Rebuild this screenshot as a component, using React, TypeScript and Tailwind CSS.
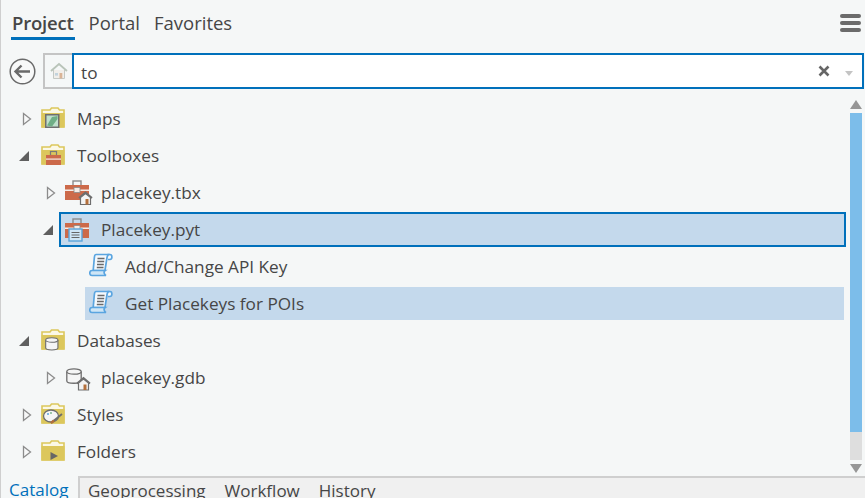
import type { ReactNode } from 'react';

const Expand = () => (
  <svg width="10" height="14" viewBox="0 0 10 14" className="block">
    <path d="M1.5 1.5 L8.5 7 L1.5 12.5 Z" fill="#f7f8f8" stroke="#8c8c8c" strokeWidth="1.3" />
  </svg>
);

const Collapse = () => (
  <svg width="10" height="10" viewBox="0 0 10 10" className="block">
    <path d="M10 0 V10 H0 Z" fill="#5f5f5f" />
  </svg>
);

// dossier jaune de base
const Folder = ({ children }: { children?: ReactNode }) => (
  <svg width="24" height="22" viewBox="0 0 24 22" className="block -mt-[2px]">
    <path d="M1 3 H9 L10.5 1 H17 L18.5 3 H23 V20 H1 Z" fill="#fbf8e6" stroke="#dcc75c" strokeWidth="1.6" />
    <rect x="0.5" y="6" width="23" height="14.5" fill="#dcc75c" />
    {children}
  </svg>
);

const House = ({ x, y }: { x: number; y: number }) => (
  <g transform={`translate(${x} ${y})`}>
    <path d="M1 6.5 L7.5 1 L14 6.5" fill="none" stroke="#6e6e6e" strokeWidth="1.8" />
    <path d="M2.5 6 L7.5 2 L12.5 6 V13 H2.5 Z" fill="#f4f4f4" stroke="#6e6e6e" strokeWidth="1.2" />
    <rect x="7.5" y="7.5" width="3" height="5.5" fill="#b4703c" />
  </g>
);

const Toolbox = ({ x = 0, y = 0 }: { x?: number; y?: number }) => (
  <g transform={`translate(${x} ${y})`}>
    <rect x="8" y="1" width="8" height="5" fill="none" stroke="#8a8a8a" strokeWidth="1.4" />
    <rect x="0" y="5" width="24" height="15" fill="#cc6a4a" />
    <rect x="0" y="9.5" width="24" height="1.5" fill="#f6ece6" />
    <rect x="9" y="7.5" width="6" height="5" fill="#f6ece6" stroke="#8a8a8a" strokeWidth="0.8" />
  </g>
);

const IconMaps = () => (
  <Folder>
    <rect x="4.75" y="7.75" width="13" height="12.5" fill="#bfe0cc" stroke="#6f6f6f" strokeWidth="1.5" />
    <path d="M6 18.5 L11 10 L16.5 9 V12 L11 19.5 Z" fill="#6fae86" />
  </Folder>
);

const IconToolboxes = () => (
  <Folder>
    <rect x="9.5" y="7.5" width="6" height="4" fill="none" stroke="#7a7a7a" strokeWidth="1.2" />
    <rect x="5" y="11" width="15" height="10" fill="#cc6a4a" />
    <rect x="5" y="14.5" width="15" height="1.2" fill="#f6ece6" />
  </Folder>
);

const IconTbx = () => (
  <svg width="28" height="26" viewBox="0 0 28 26" className="block">
    <Toolbox />
    <House x={13} y={11.5} />
  </svg>
);

const IconPyt = () => (
  <svg width="24" height="24" viewBox="0 0 24 24" className="block">
    <Toolbox />
    <rect x="4" y="11" width="13" height="12" fill="#cfe6f6" stroke="#5ba3d9" strokeWidth="1.4" />
    <path d="M6.5 14.5 H14.5 M6.5 17 H14.5 M6.5 19.5 H14.5" stroke="#666" strokeWidth="1.2" />
  </svg>
);

const IconScript = () => (
  <svg width="24" height="24" viewBox="0 0 24 24" className="block -mt-[3px]">
    <path d="M18.5 1.5 H21 C23.5 1.5 23.5 6.5 21 6.5 H19" fill="#f4f9fd" stroke="#5aa5e0" strokeWidth="1.7" />
    <path d="M7 1.5 C5.5 1.5 5.5 3 5.3 5 L4.2 17.5 H16 L18 4.5 C18.3 3 19 1.5 20.5 1.5 Z" fill="#f4f9fd" stroke="#5aa5e0" strokeWidth="1.7" />
    <path d="M8.5 5.5 H15.5 M8.2 8.5 H15.2 M8 11.5 H14.8 M7.8 14.5 H14.5" stroke="#6a6a6a" strokeWidth="1.5" />
    <path d="M3 17.5 H16 C14.5 18.5 15 21.5 17 22.5 H3 C0 22.5 0 17.5 3 17.5 Z" fill="#cfe6f6" stroke="#5aa5e0" strokeWidth="1.7" />
  </svg>
);

const Db = ({ x, y, s = 1 }: { x: number; y: number; s?: number }) => (
  <g transform={`translate(${x} ${y}) scale(${s})`}>
    <path d="M0.8 3.5 V13 C0.8 16 15.2 16 15.2 13 V3.5" fill="#f5f5f5" stroke="#6e6e6e" strokeWidth="1.3" />
    <ellipse cx="8" cy="3.5" rx="7.2" ry="2.7" fill="#f5f5f5" stroke="#6e6e6e" strokeWidth="1.3" />
  </g>
);

const IconDatabases = () => (
  <Folder>
    <Db x={4} y={8} s={0.85} />
  </Folder>
);

const IconGdb = () => (
  <svg width="28" height="26" viewBox="0 0 28 26" className="block">
    <Db x={1} y={3} />
    <House x={11} y={12} />
  </svg>
);

const IconStyles = () => (
  <Folder>
    <ellipse cx="10" cy="13" rx="7.5" ry="6" fill="#f5f5f5" stroke="#6e6e6e" strokeWidth="1.3" />
    <circle cx="7" cy="11" r="1" fill="#5ba3d9" />
    <circle cx="10" cy="10" r="1" fill="#7fb78f" />
    <path d="M10 20 L21 11" stroke="#6e6e6e" strokeWidth="1.8" />
    <path d="M10 20 L13 17.5" stroke="#b4703c" strokeWidth="2.4" />
  </Folder>
);

const IconFolders = () => (
  <Folder>
    <path d="M9.5 12 L17 16 L9.5 20 Z" fill="#666" />
  </Folder>
);

type RowProps = {
  depth: 0 | 1 | 2;
  arrow?: 'open' | 'closed';
  icon: ReactNode;
  label: string;
  variant?: 'focus' | 'selected';
};

const Row = ({ depth, arrow, icon, label, variant }: RowProps) => {
  const indent = depth === 0 ? 'pl-[18px]' : depth === 1 ? 'pl-[42px]' : 'pl-[84px]';
  const inset = depth === 2 ? 'pl-[4px]' : 'pl-[7px]';
  const box =
    variant === 'focus'
      ? 'h-[35px] bg-[#c4d9ec] border-2 border-[#0070bb] pl-[4px] ml-[1px] mr-[4px]'
      : variant === 'selected'
        ? `h-[33px] bg-[#c4d9ec] mr-[6px] ${inset}`
        : `h-[33px] mr-[6px] ${inset}`;
  return (
    <div className={`flex items-center h-[37px] ${indent}`}>
      {depth < 2 && (
        <div className={`w-[15px] h-full flex items-center shrink-0 ${arrow === 'open' ? 'justify-start' : 'justify-center'}`}>
          {arrow === 'open' ? <Collapse /> : <Expand />}
        </div>
      )}
      <div className={`flex items-center flex-1 min-w-0 ${box}`}>
        <div className="w-[36px] shrink-0">{icon}</div>
        <span className="text-[17.2px] text-[#464646] leading-none whitespace-nowrap">{label}</span>
      </div>
    </div>
  );
};

export default function App() {
  return (
    <div className="w-[865px] h-[498px] overflow-hidden flex flex-col bg-[#f5f7f7] border-l border-[#cfcfcf] font-['Open_Sans',sans-serif]">
      {/* Onglets du haut */}
      <div className="flex items-start h-[53px] pl-[10px] pr-[4px] shrink-0">
        <div className="flex items-center gap-[14px] flex-1 pt-[9px] text-[18.5px] leading-[27px] text-[#464646]">
          <span className="font-semibold border-b-[3px] border-[#0070bb] h-[31px] px-[1px] tracking-[-0.2px]">Project</span>
          <span className="h-[31px]">Portal</span>
          <span className="h-[31px]">Favorites</span>
        </div>
        <div className="flex flex-col gap-[3px] pt-[14px]">
          <div className="w-[21px] h-[4px] rounded-full bg-[#6b6b6b]" />
          <div className="w-[21px] h-[4px] rounded-full bg-[#6b6b6b]" />
          <div className="w-[21px] h-[4px] rounded-full bg-[#6b6b6b]" />
        </div>
      </div>

      {/* Barre de recherche */}
      <div className="flex items-center h-[36px] pl-[8px] shrink-0">
        <svg width="27" height="27" viewBox="0 0 27 27" className="block mr-[7px]">
          <circle cx="13.5" cy="13.5" r="12.3" fill="#f8f9f9" stroke="#6a6a6a" strokeWidth="1.5" />
          <path d="M21 13.5 H7 M12.5 7.5 L6.5 13.5 L12.5 19.5" fill="none" stroke="#6a6a6a" strokeWidth="2.4" />
        </svg>
        <div className="w-[29px] h-full border-2 border-r-0 border-[#c4c4c4] flex items-center justify-center shrink-0">
          <svg width="18" height="18" viewBox="0 0 18 18" className="block">
            <path d="M1 9 L9 2 L17 9" fill="none" stroke="#b9c4b9" strokeWidth="1.8" />
            <path d="M3.5 8 V16.5 H14.5 V8" fill="#f1eeea" stroke="#c4c8c4" strokeWidth="1" />
            <rect x="9.5" y="11" width="2.8" height="5.5" fill="#d9b497" />
            <rect x="5" y="11" width="3" height="2.6" fill="#c2d3dd" />
          </svg>
        </div>
        <div className="flex-1 h-full border-2 border-[#0070bb] bg-white flex items-center pl-[7px] pr-[9px] mr-[1px]">
          <span className="flex-1 pt-[3px] text-[17.2px] text-[#464646] leading-none">to</span>
          <svg width="12" height="12" viewBox="0 0 12 12" className="block mr-[15px]">
            <path d="M1.5 1.5 L10.5 10.5 M10.5 1.5 L1.5 10.5" stroke="#666" strokeWidth="2.6" />
          </svg>
          <svg width="8" height="5" viewBox="0 0 8 5" className="block mt-[5px]">
            <path d="M0 0 H8 L4 5 Z" fill="#c4c4c4" />
          </svg>
        </div>
      </div>

      {/* Arbre du catalogue */}
      <div className="flex flex-1 min-h-0">
        <div className="flex-1 min-w-0 pt-[11px]">
          <Row depth={0} arrow="closed" icon={<IconMaps />} label="Maps" />
          <Row depth={0} arrow="open" icon={<IconToolboxes />} label="Toolboxes" />
          <Row depth={1} arrow="closed" icon={<IconTbx />} label="placekey.tbx" />
          <Row depth={1} arrow="open" icon={<IconPyt />} label="Placekey.pyt" variant="focus" />
          <Row depth={2} icon={<IconScript />} label="Add/Change API Key" />
          <Row depth={2} icon={<IconScript />} label="Get Placekeys for POIs" variant="selected" />
          <Row depth={0} arrow="open" icon={<IconDatabases />} label="Databases" />
          <Row depth={1} arrow="closed" icon={<IconGdb />} label="placekey.gdb" />
          <Row depth={0} arrow="closed" icon={<IconStyles />} label="Styles" />
          <Row depth={0} arrow="closed" icon={<IconFolders />} label="Folders" />
        </div>
        <div className="w-[12px] mr-[3px] flex flex-col items-center pt-[11px] pb-[3px] shrink-0">
          <svg width="12" height="9" viewBox="0 0 12 9" className="block shrink-0">
            <path d="M6 0 L12 9 H0 Z" fill="#969696" />
          </svg>
          <div className="w-full h-[319px] mt-[4px] bg-[#7cbdea] shrink-0" />
          <div className="w-full flex-1 bg-[#dedede]" />
          <svg width="12" height="9" viewBox="0 0 12 9" className="block shrink-0 mt-[4px]">
            <path d="M0 0 H12 L6 9 Z" fill="#969696" />
          </svg>
        </div>
      </div>

      {/* Onglets du bas */}
      <div className="flex h-[22px] shrink-0 text-[17px] leading-[24px]">
        <div className="w-[77px] pl-[8px] pt-[2px] text-[#0070bb] whitespace-nowrap">Catalog</div>
        <div className="flex-1 flex gap-[19px] pl-[8px] pt-[1px] bg-[#f0f0f0] border-l-2 border-t-2 border-[#cfcfcf] text-[#464646] whitespace-nowrap">
          <span>Geoprocessing</span>
          <span>Workflow</span>
          <span>History</span>
        </div>
      </div>
    </div>
  );
}
